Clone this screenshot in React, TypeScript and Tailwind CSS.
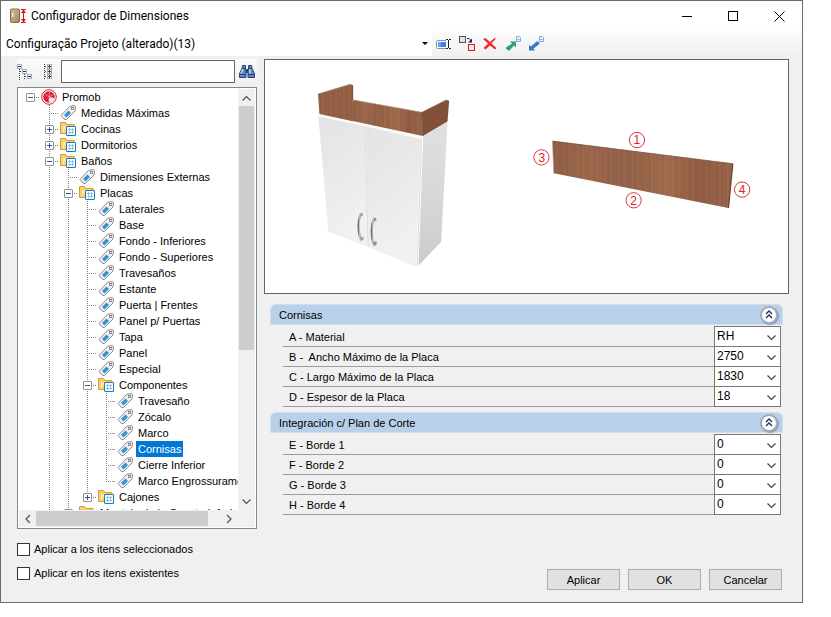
import { useState } from 'react';
import type { ReactNode } from 'react';

type NodeKind = 'root' | 'tag' | 'folder';

interface TreeNode {
    label: string;
    depth: number;
    kind: NodeKind;
    open?: boolean;
}

interface Field {
    label: string;
    value: string;
}

const NODES: TreeNode[] = [
    { label: 'Promob', depth: 0, kind: 'root', open: true },
    { label: 'Medidas Máximas', depth: 1, kind: 'tag' },
    { label: 'Cocinas', depth: 1, kind: 'folder', open: false },
    { label: 'Dormitorios', depth: 1, kind: 'folder', open: false },
    { label: 'Baños', depth: 1, kind: 'folder', open: true },
    { label: 'Dimensiones Externas', depth: 2, kind: 'tag' },
    { label: 'Placas', depth: 2, kind: 'folder', open: true },
    { label: 'Laterales', depth: 3, kind: 'tag' },
    { label: 'Base', depth: 3, kind: 'tag' },
    { label: 'Fondo - Inferiores', depth: 3, kind: 'tag' },
    { label: 'Fondo - Superiores', depth: 3, kind: 'tag' },
    { label: 'Travesaños', depth: 3, kind: 'tag' },
    { label: 'Estante', depth: 3, kind: 'tag' },
    { label: 'Puerta | Frentes', depth: 3, kind: 'tag' },
    { label: 'Panel p/ Puertas', depth: 3, kind: 'tag' },
    { label: 'Tapa', depth: 3, kind: 'tag' },
    { label: 'Panel', depth: 3, kind: 'tag' },
    { label: 'Especial', depth: 3, kind: 'tag' },
    { label: 'Componentes', depth: 3, kind: 'folder', open: true },
    { label: 'Travesaño', depth: 4, kind: 'tag' },
    { label: 'Zócalo', depth: 4, kind: 'tag' },
    { label: 'Marco', depth: 4, kind: 'tag' },
    { label: 'Cornisas', depth: 4, kind: 'tag' },
    { label: 'Cierre Inferior', depth: 4, kind: 'tag' },
    { label: 'Marco Engrossuramento', depth: 4, kind: 'tag' },
    { label: 'Cajones', depth: 3, kind: 'folder', open: false },
    { label: 'Montaje de la Gaveta Inferior', depth: 2, kind: 'folder', open: false },
];

const CORNISAS: Field[] = [
    { label: 'A - Material', value: 'RH' },
    { label: 'B -  Ancho Máximo de la Placa', value: '2750' },
    { label: 'C - Largo Máximo de la Placa', value: '1830' },
    { label: 'D - Espesor de la Placa', value: '18' },
];

const BORDES: Field[] = [
    { label: 'E - Borde 1', value: '0' },
    { label: 'F - Borde 2', value: '0' },
    { label: 'G - Borde 3', value: '0' },
    { label: 'H - Borde 4', value: '0' },
];

// true when another node of the same depth follows under the same parent
const hasNext = (index: number, depth: number) => {
    for (let i = index + 1; i < NODES.length; i++) {
        if (NODES[i].depth < depth) return false;
        if (NODES[i].depth === depth) return true;
    }
    // the top groups carry on past the loaded rows
    return depth === 1;
};

function AppIcon() {
    return (
        <svg width="18" height="17" viewBox="0 0 18 17" aria-hidden="true">
            <defs>
                <linearGradient id="door" x1="0" y1="0" x2="1" y2="1">
                    <stop offset="0" stopColor="#d8bd97" />
                    <stop offset="1" stopColor="#a98560" />
                </linearGradient>
            </defs>
            <rect x="1.5" y="1" width="9" height="13.500" rx="1" fill="url(#door)" stroke="#8d6b48" />
            <rect x="3" y="5" width="1.500" height="4" fill="#f5ead8" />
            <path d="M12 1.500h5M12 14.500h5" stroke="#e3101c" />
            <path d="M14.500 3v10" stroke="#e3101c" />
            <path d="M14.500 1.500l2.500 3.500h-5zM14.500 14.500l2.500-3.500h-5z" fill="#e3101c" />
        </svg>
    );
}

function RenameIcon() {
    return (
        <svg width="16" height="16" viewBox="0 0 16 16" aria-hidden="true">
            <rect x="0.5" y="4.5" width="12" height="8" rx="1" fill="#fff" stroke="#7f92ad" />
            <rect x="2" y="6" width="8" height="5" fill="#3f7fe8" />
            <path d="M2 6h3v5H2z" fill="#6aa0f2" />
            <rect x="10" y="4" width="4" height="9" fill="#fff" />
            <path d="M10 3.5h2M13 3.5h2M12.5 4v8M10 12.5h2M13 12.5h2" stroke="#222" />
        </svg>
    );
}

function ReplaceIcon() {
    return (
        <svg width="16" height="16" viewBox="0 0 16 16" aria-hidden="true">
            <rect x="0.5" y="0.5" width="6" height="6" fill="#e2e2ea" stroke="#5c5058" />
            <path d="M8 2.5h2l2 2" fill="none" stroke="#16246e" />
            <path d="M13 2.500v4H9z" fill="#16246e" />
            <rect x="9.500" y="8.500" width="6" height="6" fill="#e9eef3" stroke="#e8141c" />
        </svg>
    );
}

function DeleteIcon() {
    return (
        <svg width="16" height="16" viewBox="0 0 16 16" aria-hidden="true">
            <path d="M1 3l2.500-1L8 6l4.500-4 1.500.5-4.500 5L14.500 12 13 13.500 8 9.500l-4.500 4L1.500 12l4.500-4.500z" fill="#f02c2c" />
        </svg>
    );
}

function PageMark() {
    return (
        <g>
            <path d="M11.500.5h3l1 1v4h-4z" fill="#e5effb" stroke="#86acdb" />
            <path d="M12.500 3.500h2" stroke="#86acdb" />
        </g>
    );
}

function ExportIcon() {
    return (
        <svg width="16" height="16" viewBox="0 0 16 16" aria-hidden="true">
            <PageMark />
            <path d="M5 5.500h6v6L9 9.500 4.500 14.500 3 14.500 1 12.500v-1L7 7.500z" fill="#2f9e78" />
        </svg>
    );
}

function ImportIcon() {
    return (
        <svg width="16" height="16" viewBox="0 0 16 16" aria-hidden="true">
            <PageMark />
            <path d="M8.500 5.500h1.500l1.500 1.500v1L5.500 12.500l1.500 2H1V9l2 1.500z" fill="#3a78c8" />
        </svg>
    );
}

function CollapseTreeIcon() {
    return (
        <svg width="16" height="16" viewBox="0 0 16 16" aria-hidden="true">
            <path d="M2.500 5v11M7.500 10v6" stroke="#444" strokeDasharray="1 1" />
            <path d="M3 7.500h3M8 12.500h3" stroke="#444" strokeDasharray="1 1" />
            <g fill="#fff" stroke="#a3afc0">
                <rect x="0.500" y="0.500" width="4" height="4" />
                <rect x="5.500" y="5.500" width="4" height="4" />
                <rect x="10.500" y="10.500" width="4" height="4" />
            </g>
            <path d="M1 2.500h3M6 7.500h3M11 12.500h3" stroke="#333" />
        </svg>
    );
}

function ExpandTreeIcon() {
    return (
        <svg width="16" height="16" viewBox="0 0 16 16" aria-hidden="true">
            <path d="M4.500 0v16" stroke="#333" strokeDasharray="1 1" />
            <path d="M5 2.500h3M5 7.500h3M5 12.500h3" stroke="#555" strokeDasharray="1 1" />
            <g fill="#fff" stroke="#a8adb5">
                <rect x="7.500" y="0.500" width="4" height="4" />
                <rect x="7.500" y="5.500" width="4" height="4" />
                <rect x="7.500" y="10.500" width="4" height="4" />
            </g>
            <path d="M8 2.500h3M8 7.500h3M8 12.500h3M9.500 1v3M9.500 6v3M9.500 11v3" stroke="#444" />
        </svg>
    );
}

function BinocularsIcon() {
    return (
        <svg width="16" height="16" viewBox="0 0 16 16" aria-hidden="true">
            <rect x="6" y="5" width="4" height="4" fill="#27447c" />
            <g fill="#5f86c0" stroke="#27447c">
                <path d="M3.500 1.500h3v3l.5 2v7H.5v-4l2.500-5z" />
                <path d="M12.500 1.500h-3v3l-.5 2v7h6.500v-4l-2.500-5z" />
            </g>
            <path d="M4 5l-2 4.500M11 5v4.500" stroke="#c3d6f2" strokeWidth="1.500" />
            <path d="M1 10.500h6M9 10.500h6M3 4.500h4M9 4.500h4" stroke="#27447c" />
        </svg>
    );
}

function RootIcon() {
    return (
        <svg width="16" height="16" viewBox="0 0 16 16" className="shrink-0" aria-hidden="true">
            <circle cx="8" cy="8" r="7.300" fill="#fff" stroke="#d81f30" />
            <circle cx="8" cy="8" r="5.800" fill="#d81f30" />
            <path d="M8 8l.5-5M8 8l4.500-2.500M8 8L4 5" stroke="#f4a9af" strokeWidth="0.800" />
            <path d="M8.500 8l5 1-1.500 3.500L8.500 14 7.500 11z" fill="#fff" opacity="0.900" />
        </svg>
    );
}

function TagIcon() {
    return (
        <svg width="16" height="16" viewBox="0 0 16 16" className="shrink-0" aria-hidden="true">
            <path d="M1 10.500L9.500 1.500l4.500-1 1.500 1-.5 4.500L6.500 14.500 4.500 14.500z" fill="#f1f1f1" stroke="#8c8c8c" />
            <path d="M4 10l4.500-4.500 2.500 2.500L6.500 12.500z" fill="#2f94d6" />
            <rect x="11.500" y="2.500" width="2" height="2" fill="#fff" stroke="#777" strokeWidth="0.800" />
        </svg>
    );
}

function FolderIcon() {
    return (
        <svg width="16" height="16" viewBox="0 0 16 16" className="shrink-0" aria-hidden="true">
            <path d="M.5 1.500h5l1.500 2h7v9h-13.500z" fill="#f9cf72" stroke="#d79a3a" />
            <path d="M3 5.500h11v2H5l-2 4.500z" fill="#fdeec2" />
            <rect x="6.500" y="5.500" width="9" height="9" rx="0.500" fill="#fff" stroke="#1b7ab8" />
            <path d="M8 8.500h6M8 11.500h6M9.500 7v6M12.500 7v6" stroke="#8ec2e6" />
        </svg>
    );
}

function Chevron({ className }: { className?: string }) {
    return (
        <svg width="9" height="6" viewBox="0 0 9 6" className={className} aria-hidden="true">
            <path d="M.5.5l4 4 4-4" fill="none" stroke="currentColor" strokeWidth="1.200" />
        </svg>
    );
}

function ToolButton({ label, children }: { label: string; children: ReactNode }) {
    return (
        <button type="button" aria-label={label} className="flex h-6 items-center">
            {children}
        </button>
    );
}

function TitleBar() {
    return (
        <header className="flex h-[30px] items-center bg-white pl-2 font-[Roboto,sans-serif] text-[12px]">
            <AppIcon />
            <h1 className="ml-1 flex-1">Configurador de Dimensiones</h1>
            <button type="button" aria-label="Minimizar" className="flex h-full w-[46px] items-center justify-center">
                <span className="h-px w-[10px] bg-black" />
            </button>
            <button type="button" aria-label="Maximizar" className="flex h-full w-[46px] items-center justify-center">
                <span className="size-[10px] border border-black" />
            </button>
            <button type="button" aria-label="Cerrar" className="flex h-full w-[46px] items-center justify-center">
                <svg width="11" height="11" viewBox="0 0 11 11" aria-hidden="true">
                    <path d="M.5.5l10 10M10.500.5l-10 10" stroke="#000" />
                </svg>
            </button>
        </header>
    );
}

function ProjectBar() {
    return (
        <div className="flex h-[25px] items-center gap-[7px] bg-linear-to-b from-[#fcfcfc] to-[#f0f0f0]">
            <div className="relative -mr-[3px] flex h-full w-[431px] items-center bg-white">
                <select
                    aria-label="Configuração"
                    className="h-full w-full appearance-none bg-transparent pl-[5px] font-[Roboto,sans-serif] text-[12px] outline-none"
                >
                    <option>Configuração Projeto (alterado)(13)</option>
                </select>
                <span className="pointer-events-none absolute top-[11px] right-1 border-x-3 border-t-3 border-x-transparent border-t-black" />
            </div>
            <ToolButton label="Renombrar">
                <RenameIcon />
            </ToolButton>
            <ToolButton label="Reemplazar">
                <ReplaceIcon />
            </ToolButton>
            <ToolButton label="Eliminar">
                <DeleteIcon />
            </ToolButton>
            <ToolButton label="Exportar">
                <ExportIcon />
            </ToolButton>
            <ToolButton label="Importar">
                <ImportIcon />
            </ToolButton>
        </div>
    );
}

function SearchBar() {
    return (
        <div className="flex h-[25px] items-center bg-linear-to-b from-[#fbfbfb] to-[#f0f0f0] pr-[2px]">
            <ToolButton label="Contraer todo">
                <CollapseTreeIcon />
            </ToolButton>
            <span className="w-[7px]" />
            <ToolButton label="Expandir todo">
                <ExpandTreeIcon />
            </ToolButton>
            <input
                type="text"
                aria-label="Buscar"
                className="ml-[5px] h-[23px] min-w-0 flex-1 border border-[#646464] bg-white px-1 outline-none"
            />
            <span className="w-1" />
            <ToolButton label="Buscar siguiente">
                <BinocularsIcon />
            </ToolButton>
        </div>
    );
}

// one 19px column of the tree's guide lines
function Guide({ up, down, across, children }: { up: boolean; down: boolean; across: boolean; children?: ReactNode }) {
    return (
        <span className="relative h-4 w-[19px] shrink-0">
            {up && (
                <span className="absolute top-0 left-[9px] h-2 w-px bg-[linear-gradient(#808080_50%,transparent_50%)] bg-size-[1px_2px]" />
            )}
            {down && (
                <span className="absolute top-2 left-[9px] h-2 w-px bg-[linear-gradient(#808080_50%,transparent_50%)] bg-size-[1px_2px]" />
            )}
            {across && (
                <span className="absolute top-2 right-0 left-[9px] h-px bg-[linear-gradient(90deg,#808080_50%,transparent_50%)] bg-size-[2px_1px]" />
            )}
            {children}
        </span>
    );
}

function TreeRow({ node, index, selected, onSelect }: { node: TreeNode; index: number; selected: boolean; onSelect: () => void }) {
    const columns = Array.from({ length: node.depth + 1 }, (_, i) => i);

    return (
        <li className="flex h-4 items-center">
            {columns.map((column) => {
                const last = column === node.depth;
                const next = column > 0 && hasNext(index, column);
                return (
                    <Guide key={column} up={last ? column > 0 : next} down={next} across={last}>
                        {last && node.kind !== 'tag' && (
                            <button
                                type="button"
                                aria-label={`${node.open ? 'Contraer' : 'Expandir'} ${node.label}`}
                                className="absolute top-1 left-[5px] flex size-[9px] items-center justify-center rounded-[1px] border border-[#919191] bg-white"
                            >
                                <span className="absolute h-px w-[5px] bg-[#3b4fa0]" />
                                {!node.open && <span className="absolute h-[5px] w-px bg-[#3b4fa0]" />}
                            </button>
                        )}
                    </Guide>
                );
            })}
            <span className="ml-px shrink-0">
                {node.kind === 'root' && <RootIcon />}
                {node.kind === 'tag' && <TagIcon />}
                {node.kind === 'folder' && <FolderIcon />}
            </span>
            <button
                type="button"
                onClick={onSelect}
                className={
                    selected
                        ? 'ml-[3px] h-4 bg-[#0078d7] px-[2px] leading-4 whitespace-nowrap text-white'
                        : 'ml-[3px] h-4 px-[2px] leading-4 whitespace-nowrap'
                }
            >
                {node.label}
            </button>
        </li>
    );
}

function Tree() {
    const [selected, setSelected] = useState('Cornisas');

    return (
        <div className="grid h-[442px] grid-cols-[minmax(0,1fr)_17px] grid-rows-[minmax(0,1fr)_17px] border border-[#828790] bg-white p-px">
            <ul className="overflow-hidden pl-[2px]">
                {NODES.map((node, index) => (
                    <TreeRow
                        key={`${node.depth}-${node.label}`}
                        node={node}
                        index={index}
                        selected={selected === node.label}
                        onSelect={() => setSelected(node.label)}
                    />
                ))}
            </ul>
            <div className="flex flex-col bg-[#f0f0f0] text-[#505050]">
                <button type="button" aria-label="Arriba" className="flex h-[17px] items-center justify-center">
                    <Chevron className="rotate-180" />
                </button>
                <div className="flex-1 pl-px">
                    <div className="h-[63%] w-[15px] bg-[#cdcdcd]" />
                </div>
                <button type="button" aria-label="Abajo" className="flex h-[17px] items-center justify-center">
                    <Chevron />
                </button>
            </div>
            <div className="flex bg-[#f0f0f0] text-[#505050]">
                <button type="button" aria-label="Izquierda" className="flex w-[17px] items-center justify-center">
                    <Chevron className="rotate-90" />
                </button>
                <div className="flex-1 py-px">
                    <div className="h-full w-[93%] bg-[#cdcdcd]" />
                </div>
                <button type="button" aria-label="Derecha" className="flex w-[17px] items-center justify-center">
                    <Chevron className="-rotate-90" />
                </button>
            </div>
            <div className="bg-[#f0f0f0]" />
        </div>
    );
}

function CheckItem({ id, label }: { id: string; label: string }) {
    return (
        <div className="flex h-6 items-center gap-1">
            <input
                id={id}
                type="checkbox"
                className="size-[13px] appearance-none border border-[#333] bg-white checked:bg-[#0078d7]"
            />
            <label htmlFor={id}>{label}</label>
        </div>
    );
}

function Preview() {
    return (
        <div className="border border-[#646464] bg-white">
            <svg viewBox="0 0 524 233" className="block h-[233px] w-full" role="img" aria-label="Cornisas">
                <defs>
                    <linearGradient id="wood" x1="0" x2="1">
                        <stop offset="0" stopColor="#8f5d43" />
                        <stop offset="0.200" stopColor="#9c684c" />
                        <stop offset="0.350" stopColor="#93614a" />
                        <stop offset="0.500" stopColor="#976448" />
                        <stop offset="0.650" stopColor="#9f6b4e" />
                        <stop offset="0.800" stopColor="#8f5c42" />
                        <stop offset="1" stopColor="#98644a" />
                    </linearGradient>
                    <pattern id="grain" width="41" height="200" patternUnits="userSpaceOnUse">
                        <path d="M3 0v200M14 0v200M19 0v200M31 0v200" stroke="#70442f" strokeOpacity="0.200" strokeWidth="2" />
                        <path d="M8 0v200M26 0v200" stroke="#b98664" strokeOpacity="0.200" strokeWidth="3" />
                    </pattern>
                    <linearGradient id="panel" x1="0" y1="0" x2="0.300" y2="1">
                        <stop offset="0" stopColor="#e3e3e5" />
                        <stop offset="0.600" stopColor="#ebebec" />
                        <stop offset="1" stopColor="#f1f1f1" />
                    </linearGradient>
                    <linearGradient id="side" x1="0" y1="0" x2="0" y2="1">
                        <stop offset="0" stopColor="#e0e0e1" />
                        <stop offset="0.500" stopColor="#d8d8d9" />
                        <stop offset="1" stopColor="#cccccd" />
                    </linearGradient>
                    <linearGradient id="metal" x1="0" x2="1">
                        <stop offset="0" stopColor="#777" />
                        <stop offset="0.600" stopColor="#d8d8d8" />
                        <stop offset="1" stopColor="#888" />
                    </linearGradient>
                </defs>

                <g transform="translate(35.5 10.500) scale(0.33333)">
                    <path d="M54 130L368 196 364 206 54 139z" fill="#fafafa" />
                    <path d="M54 138L193 167 205 531 84 484z" fill="url(#panel)" />
                    <path d="M196 168L362 205 348 590 206 531z" fill="url(#panel)" />
                    <path d="M194 168L204 530" stroke="#d0d0d2" strokeWidth="2" />
                    <path d="M362 205L368 197 354 586 347 589z" fill="#fbfbfb" />
                    <path d="M369 196L442 154 423 514 355 586z" fill="url(#side)" />
                    <path d="M364 204L351 586" stroke="#cbcbcd" strokeWidth="2" />
                    <path d="M53 70L150 41 157 44 157 88 158 152 57 130z" fill="#945f44" />
                    <path d="M157 87L365 125 368 196 150 150z" fill="url(#wood)" />
                    <path d="M53 70L150 41 157 44 158 88 365 125 368 196 57 130z" fill="url(#grain)" />
                    <path d="M53 70L150 41 157 44" fill="none" stroke="#a87b62" strokeWidth="2" />
                    <path d="M157 88L365 125" stroke="#b78c74" strokeWidth="2" />
                    <path d="M157 44V88" stroke="#74452f" strokeWidth="3" />
                    <path d="M365 125L438 88 447 91 442 153 368 196z" fill="#825038" />
                    <path d="M365 125L438 88 447 91" fill="none" stroke="#9d6f57" strokeWidth="2" />
                    <path d="M365 125l3 71" stroke="#74452f" strokeWidth="2" />
                    <path d="M182 428Q167 466 182 509" fill="none" stroke="url(#metal)" strokeWidth="7" />
                    <path d="M180 429h8v8h-6zM178 502l12-3v8l-8 6z" fill="#a5a5a5" />
                    <path d="M222 442Q207 480 221 524" fill="none" stroke="url(#metal)" strokeWidth="7" />
                    <path d="M220 443h8v8h-6zM218 516l11-3v10l-8 5z" fill="#8f8f8f" />
                </g>

                <g transform="translate(256 60) scale(0.33333)">
                    <path d="M96 63L638 131 625 264 100 160z" fill="url(#wood)" />
                    <path d="M96 63L638 131 625 264 100 160z" fill="url(#grain)" />
                    <path d="M96 63L638 131" stroke="#6b4330" strokeWidth="2" />
                    <path d="M638 131L625 264" stroke="#704530" strokeWidth="4" />
                    <path d="M96 63L100 160" stroke="#c5a08c" strokeWidth="2" />
                    <g fill="none" stroke="#dc3338" strokeWidth="3">
                        <circle cx="350" cy="60" r="23" />
                        <circle cx="340" cy="241" r="23" />
                        <circle cx="63" cy="112" r="23" />
                        <circle cx="666" cy="209" r="23" />
                    </g>
                    <g fill="#dc2026" fontFamily="Liberation Sans, sans-serif" fontSize="36" textAnchor="middle">
                        <text x="350" y="73">1</text>
                        <text x="340" y="254">2</text>
                        <text x="64" y="125">3</text>
                        <text x="666" y="222">4</text>
                    </g>
                </g>
            </svg>
        </div>
    );
}

function Section({ id, title, fields }: { id: string; title: string; fields: Field[] }) {
    const [open, setOpen] = useState(true);

    return (
        <section className="mx-[6px]">
            <div className="flex h-[21px] items-center justify-between rounded-t-md border border-[#cfdff1] bg-[#b9d0ea] pr-1 pl-2">
                <h2>{title}</h2>
                <button
                    type="button"
                    aria-label={title}
                    aria-expanded={open}
                    onClick={() => setOpen((prev) => !prev)}
                    className="flex size-[18px] items-center justify-center rounded-full border-2 border-[#a3abbb] bg-white shadow-[1px_1px_1px_#8a9ab5]"
                >
                    <svg width="8" height="9" viewBox="0 0 8 9" aria-hidden="true">
                        <path d="M1 4l3-3 3 3M1 8l3-3 3 3" fill="none" stroke="#1d2f66" strokeWidth="1.400" />
                    </svg>
                </button>
            </div>
            {open && (
                <div className="mt-px mr-[2px] ml-[13px]">
                    {fields.map((field, i) => (
                        <div key={field.label} className="group flex h-5 first:h-[21px]">
                            <label
                                htmlFor={`${id}-${i}`}
                                className="flex flex-1 items-center border-b border-[#9c9c9c] pl-[6px] whitespace-pre group-first:pt-px"
                            >
                                {field.label}
                            </label>
                            <div className="relative w-[67px] border-x border-b border-[#777] bg-white group-first:border-t">
                                <select
                                    id={`${id}-${i}`}
                                    defaultValue={field.value}
                                    className="block h-full w-full appearance-none bg-transparent pb-[2px] pl-[2px] text-[12px] outline-none"
                                >
                                    <option>{field.value}</option>
                                </select>
                                <Chevron className="pointer-events-none absolute top-2 right-1 text-[#444]" />
                            </div>
                        </div>
                    ))}
                </div>
            )}
        </section>
    );
}

function DialogButton({ children }: { children: ReactNode }) {
    return (
        <button type="button" className="h-[21px] w-[73px] border border-[#adadad] bg-[#e1e1e1] text-center">
            {children}
        </button>
    );
}

export default function App() {
    return (
        <div className="min-h-screen bg-white pr-7 font-['Liberation_Sans',Arial,sans-serif] text-[11px] leading-4 text-black">
            <div className="border border-[#6b6b6b] bg-[#f0f0f0]">
                <TitleBar />
                <ProjectBar />
                <main className="flex gap-[7px] pt-[3px] pr-[13px] pl-4">
                    <div className="w-[240px] shrink-0">
                        <SearchBar />
                        <div className="mt-[3px]">
                            <Tree />
                        </div>
                    </div>
                    <div className="flex min-w-0 flex-1 flex-col">
                        <Preview />
                        <div className="mt-[10px] flex flex-col gap-[5px]">
                            <Section id="cornisas" title="Cornisas" fields={CORNISAS} />
                            <Section id="bordes" title="Integración c/ Plan de Corte" fields={BORDES} />
                        </div>
                    </div>
                </main>
                <footer className="flex items-end justify-between pt-2 pr-5 pb-3 pl-4">
                    <div className="pb-[5px]">
                        <CheckItem id="selected-items" label="Aplicar a los itens seleccionados" />
                        <CheckItem id="existing-items" label="Aplicar en los itens existentes" />
                    </div>
                    <div className="flex gap-2">
                        <DialogButton>Aplicar</DialogButton>
                        <DialogButton>OK</DialogButton>
                        <DialogButton>Cancelar</DialogButton>
                    </div>
                </footer>
            </div>
        </div>
    );
}
